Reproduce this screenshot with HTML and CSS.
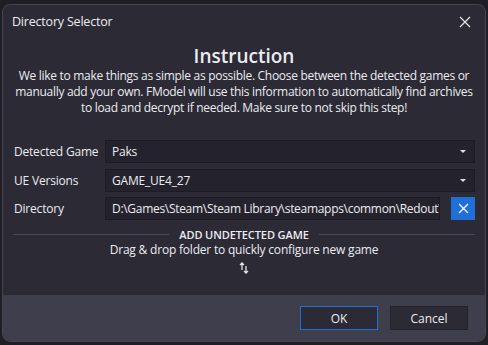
FILE: index.html
```html
<!DOCTYPE html>
<html lang="en">
<head>
    <meta charset="UTF-8">
    <title>Directory Selector</title>
    <link rel="stylesheet" href="styles.css">
</head>
<body>
    <div class="window">
        <div class="title-bar">
            <span class="title">Directory Selector</span>
            <span class="close">
                <svg width="12" height="12" viewBox="0 0 12 12"><path d="M1 1L11 11M11 1L1 11" stroke="#e6e6e6" stroke-width="1.2"/></svg>
            </span>
        </div>
        <div class="content">
            <div class="heading">Instruction</div>
            <p class="intro">We like to make things as simple as possible. Choose between the detected games or manually add your own. FModel will use this information to automatically find archives to load and decrypt if needed. Make sure to not skip this step!</p>

            <div class="form">
                <label class="field-label">Detected Game</label>
                <div class="field combo"><span>Paks</span><span class="caret"></span></div>

                <label class="field-label">UE Versions</label>
                <div class="field combo"><span>GAME_UE4_27</span><span class="caret"></span></div>

                <label class="field-label">Directory</label>
                <div class="dir-row">
                    <div class="field text"><span>D:\Games\Steam\Steam Library\steamapps\common\Redout\</span></div>
                    <button class="clear-btn">
                        <svg width="11" height="11" viewBox="0 0 11 11"><path d="M1 1L10 10M10 1L1 10" stroke="#fff" stroke-width="1.4"/></svg>
                    </button>
                </div>
            </div>

            <div class="divider"><span>ADD UNDETECTED GAME</span></div>
            <div class="drop-hint">Drag &amp; drop folder to quickly configure new game</div>
            <div class="drop-icon">
                <svg width="10" height="12" viewBox="0 0 10 12"><path d="M3 1V8M1 3L3 1L5 3M7 4V11M5 9L7 11L9 9" stroke="#e0e0e0" stroke-width="1.3" fill="none"/></svg>
            </div>
        </div>
        <div class="footer">
            <button class="btn primary">OK</button>
            <button class="btn">Cancel</button>
        </div>
    </div>
</body>
</html>
```

FILE: styles.css
```css
body {
    margin: 0;
    padding: 0;
    background-color: #1e1e24;
    font-family: "Open Sans", "Noto Sans", sans-serif;
    color: #ececf0;
    overflow: hidden;
}
.window {
    margin: 4px 2px 0 2px;
    height: 338px;
    box-sizing: border-box;
    background-color: #2b2a35;
    border: 1px solid #46454f;
    border-radius: 8px;
    display: flex;
    flex-direction: column;
    overflow: hidden;
}
.title-bar {
    height: 33px;
    display: flex;
    align-items: center;
    justify-content: space-between;
    padding: 0 14px 0 9px;
}
.title {
    font-size: 12.5px;
    letter-spacing: -0.2px;
}
.close {
    display: flex;
}
.content {
    flex: 1;
    padding: 0 10px;
}
.heading {
    text-align: center;
    font-size: 19px;
    font-weight: 600;
    line-height: 24px;
    margin-top: 6px;
}
.intro {
    margin: 0;
    text-align: center;
    font-size: 12px;
    line-height: 16px;
    letter-spacing: -0.3px;
}
.form {
    display: grid;
    grid-template-columns: 92px minmax(0, 1fr);
    row-gap: 5.5px;
    align-items: center;
    margin-top: 24px;
    letter-spacing: -0.2px;
}
.field-label {
    font-size: 12px;
    padding-left: 1px;
}
.field {
    height: 23px;
    box-sizing: border-box;
    background-color: #24232d;
    border: 1px solid #1d1c24;
    display: flex;
    align-items: center;
    font-size: 12px;
    padding: 0 6px;
    overflow: hidden;
    white-space: nowrap;
}
.combo {
    justify-content: space-between;
}
.caret {
    width: 0;
    height: 0;
    border-left: 3.5px solid transparent;
    border-right: 3.5px solid transparent;
    border-top: 3.5px solid #e0e0e0;
    margin-right: 2px;
}
.dir-row {
    display: flex;
    gap: 11px;
    min-width: 0;
}
.text {
    flex: 1;
    min-width: 0;
    letter-spacing: -0.3px;
}
.clear-btn {
    flex: none;
    width: 24px;
    height: 23px;
    border: none;
    padding: 0;
    background-color: #1f6fd6;
    display: flex;
    align-items: center;
    justify-content: center;
}
.divider {
    display: flex;
    align-items: center;
    gap: 10px;
    margin-top: 7px;
    font-size: 11px;
    font-weight: 600;
    letter-spacing: -0.1px;
}
.divider::before,
.divider::after {
    content: "";
    flex: 1;
    height: 1px;
    background-color: #4a4958;
}
.drop-hint {
    text-align: center;
    font-size: 12px;
    line-height: 15px;
    letter-spacing: -0.2px;
}
.drop-icon {
    display: flex;
    justify-content: center;
    margin-top: 5px;
}
.footer {
    height: 46px;
    background-color: #3f3e4c;
    display: flex;
    justify-content: flex-end;
    align-items: center;
    gap: 12px;
    padding-right: 17px;
}
.btn {
    width: 78px;
    height: 24px;
    box-sizing: border-box;
    font-family: inherit;
    font-size: 12px;
    color: #ececf0;
    background-color: #2b2a35;
    border: 1px solid #24232c;
}
.btn.primary {
    border-color: #1f6fd6;
}
```
